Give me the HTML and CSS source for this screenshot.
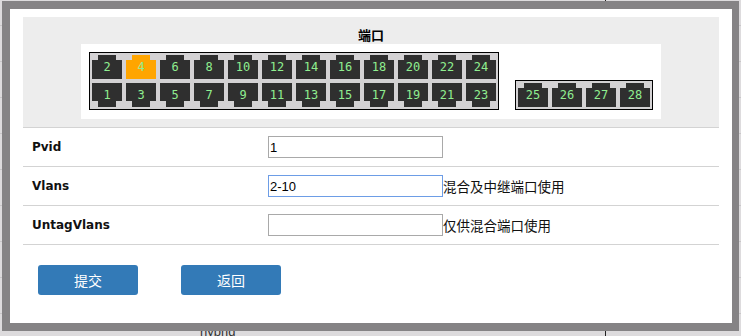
FILE: index.html
```html
<!DOCTYPE html>
<html lang="zh-CN">
<head>
  <meta charset="UTF-8" />
  <meta name="viewport" content="width=device-width, initial-scale=1.0"/>
  <title>端口设置</title>
  <link rel="stylesheet" href="styles.css">
</head>
<body>
  <!-- page behind the dialog -->
  <div class="page">
    <div class="page-row first"><div class="cell-a"></div><div class="cell-b"></div></div>
    <div class="page-row"><div class="cell-a"></div><div class="cell-b"></div></div>
    <div class="page-row"><div class="cell-a"></div><div class="cell-b"></div></div>
    <div class="page-row"><div class="cell-a"></div><div class="cell-b"></div></div>
    <div class="page-row"><div class="cell-a"></div><div class="cell-b"></div></div>
    <div class="page-row"><div class="cell-a"></div><div class="cell-b"></div></div>
    <div class="page-row"><div class="cell-a"></div><div class="cell-b"></div></div>
    <div class="page-row"><div class="cell-a"></div><div class="cell-b"></div></div>
    <div class="page-row"><div class="cell-a"></div><div class="cell-b"></div></div>
    <div class="page-row last"><div class="cell-a">hybrid</div><div class="cell-b"></div></div>
  </div>

  <div class="modal">
    <div class="ports-panel">
      <div class="ports-title">端口</div>
      <div class="ports-box">
        <div class="port-group">
          <div class="port-row">
            <div class="port up">2</div>
            <div class="port up active">4</div>
            <div class="port up">6</div>
            <div class="port up">8</div>
            <div class="port up">10</div>
            <div class="port up">12</div>
            <div class="port up">14</div>
            <div class="port up">16</div>
            <div class="port up">18</div>
            <div class="port up">20</div>
            <div class="port up">22</div>
            <div class="port up">24</div>
          </div>
          <div class="port-row">
            <div class="port down">1</div>
            <div class="port down">3</div>
            <div class="port down">5</div>
            <div class="port down">7</div>
            <div class="port down">9</div>
            <div class="port down">11</div>
            <div class="port down">13</div>
            <div class="port down">15</div>
            <div class="port down">17</div>
            <div class="port down">19</div>
            <div class="port down">21</div>
            <div class="port down">23</div>
          </div>
        </div>
        <div class="port-group">
          <div class="port-row">
            <div class="port up">25</div>
            <div class="port up">26</div>
            <div class="port up">27</div>
            <div class="port up">28</div>
          </div>
        </div>
      </div>
    </div>

    <div class="form-row">
      <label class="form-label" for="pvid">Pvid</label>
      <input type="text" id="pvid" value="1" />
    </div>
    <div class="form-row">
      <label class="form-label" for="vlans">Vlans</label>
      <input type="text" id="vlans" class="focused" value="2-10" />
      <span class="hint">混合及中继端口使用</span>
    </div>
    <div class="form-row">
      <label class="form-label" for="untag">UntagVlans</label>
      <input type="text" id="untag" value="" />
      <span class="hint">仅供混合端口使用</span>
    </div>

    <div class="actions">
      <button type="submit" class="btn">提交</button>
      <button type="button" class="btn">返回</button>
    </div>
  </div>
</body>
</html>
```

FILE: styles.css
```css
body {
  margin: 0;
  background-color: #dddbdd;
  font-family: "DejaVu Sans", "Noto Sans CJK SC", sans-serif;
  font-size: 12px;
  color: #222;
}

/* background list */
.page-row {
  display: flex;
  height: 35px;
  border-bottom: 1px solid #c8c6c8;
}

.page-row.first {
  height: 25px;
}

.cell-a {
  width: 605px;
  padding-left: 200px;
  box-sizing: border-box;
}

.cell-b {
  flex: 1;
  border-left: 1px solid #222;
}

.page-row.last .cell-a {
  padding-top: 10px;
  font-family: "Liberation Sans", sans-serif;
  font-size: 13px;
  color: #333;
}

/* dialog */
.modal {
  position: absolute;
  left: 2px;
  top: 1px;
  width: 737px;
  height: 330px;
  box-sizing: border-box;
  background-color: #fff;
  border-style: solid;
  border-color: #858385;
  border-width: 8px 7px 8px 8px;
  padding: 8px 13px 0;
}

.ports-panel {
  background-color: #ededed;
  border-bottom: 1px solid #d3d3d3;
  padding-bottom: 8px;
}

.ports-title {
  text-align: center;
  font-family: "Noto Sans CJK SC", sans-serif;
  font-weight: bold;
  font-size: 13px;
  line-height: 19px;
  padding-top: 8px;
  color: #000;
}

.ports-box {
  width: 580px;
  margin: 0 auto;
  box-sizing: border-box;
  background-color: #fff;
  padding: 8px 8px 9px;
  display: flex;
  align-items: flex-end;
  gap: 16px;
}

.port-group {
  border: 1px solid #000;
  background-color: #d4d2d4;
  padding: 2px;
  display: flex;
  flex-direction: column;
  gap: 4px;
}

.port-row {
  display: flex;
  gap: 4px;
}

.port {
  width: 30px;
  height: 24px;
  background-color: #2f2f2f;
  color: #90ee90;
  font-family: "DejaVu Sans Mono", monospace;
  font-size: 12px;
  line-height: 24px;
  text-align: center;
}

.port.up {
  clip-path: polygon(0 5px, 6px 5px, 6px 0, 24px 0, 24px 5px, 100% 5px, 100% 100%, 0 100%);
}

.port.down {
  clip-path: polygon(0 0, 100% 0, 100% 18px, 24px 18px, 24px 100%, 6px 100%, 6px 18px, 0 18px);
}

.port.active {
  background-color: #ffa500;
}

/* form */
.form-row {
  display: flex;
  align-items: center;
  height: 38px;
  border-bottom: 1px solid #d3d3d3;
}

.form-label {
  width: 245px;
  padding-left: 9px;
  box-sizing: border-box;
  font-weight: bold;
  color: #111;
}

input {
  width: 175px;
  height: 22px;
  box-sizing: border-box;
  margin: 0;
  padding: 1px 1px;
  border: 1px solid #a9a9a9;
  font-family: "Liberation Sans", sans-serif;
  font-size: 13px;
  color: #000;
  outline: none;
}

input.focused {
  border-color: #6d9de6;
}

.hint {
  font-family: "Noto Sans CJK SC", sans-serif;
  font-size: 13.5px;
  color: #111;
}

.actions {
  display: flex;
  gap: 43px;
  padding: 20px 15px;
}

.btn {
  width: 100px;
  height: 30px;
  border: none;
  border-radius: 3px;
  background-color: #337ab7;
  color: #fff;
  font-family: "Noto Sans CJK SC", sans-serif;
  font-size: 14px;
  cursor: pointer;
}
```
